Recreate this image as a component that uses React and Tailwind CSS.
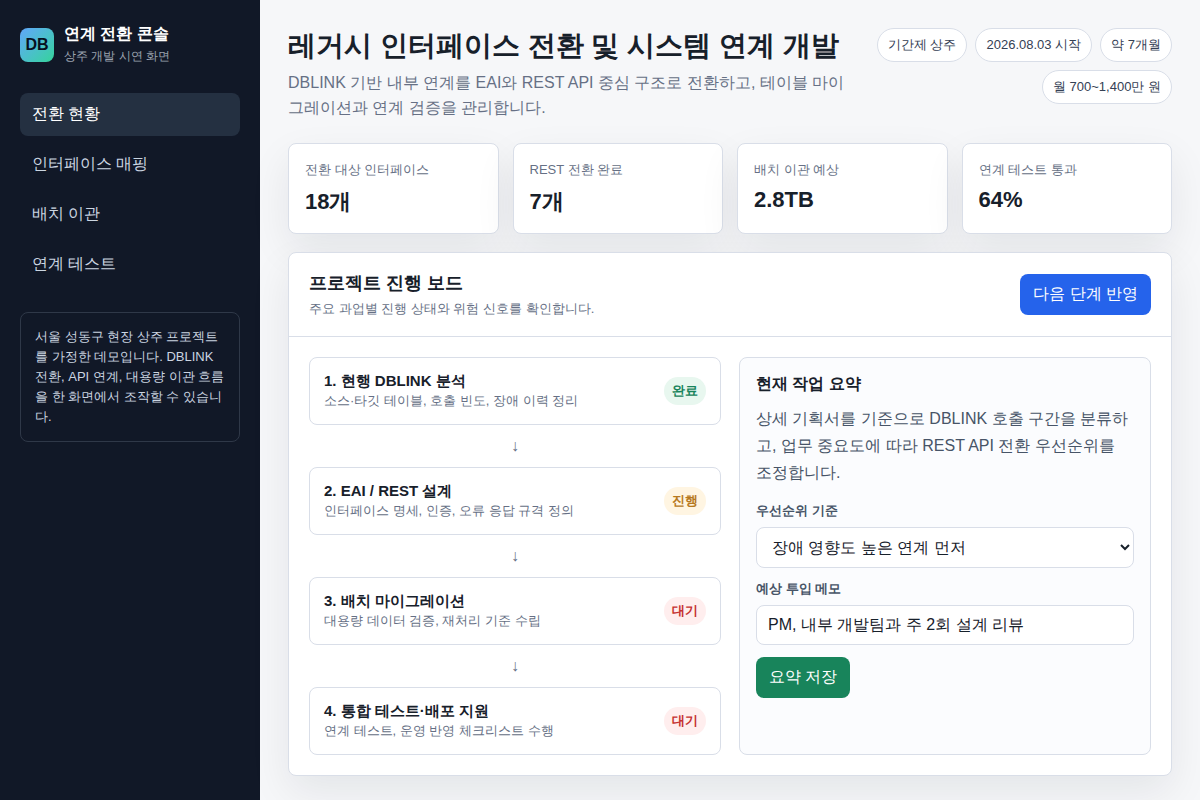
import { useState } from "react";
import clsx from "clsx";

const NAV_ITEMS = ["전환 현황", "인터페이스 매핑", "배치 이관", "연계 테스트"];

const TAGS = ["기간제 상주", "2026.08.03 시작", "약 7개월", "월 700~1,400만 원"];

const METRICS = [
  { label: "전환 대상 인터페이스", value: "18개" },
  { label: "REST 전환 완료", value: "7개" },
  { label: "배치 이관 예상", value: "2.8TB" },
  { label: "연계 테스트 통과", value: "64%" },
];

const STEPS = [
  { title: "1. 현행 DBLINK 분석", desc: "소스·타깃 테이블, 호출 빈도, 장애 이력 정리", status: "완료" },
  { title: "2. EAI / REST 설계", desc: "인터페이스 명세, 인증, 오류 응답 규격 정의", status: "진행" },
  { title: "3. 배치 마이그레이션", desc: "대용량 데이터 검증, 재처리 기준 수립", status: "대기" },
  { title: "4. 통합 테스트·배포 지원", desc: "연계 테스트, 운영 반영 체크리스트 수행", status: "대기" },
];

const STATUS_STYLES = {
  완료: "bg-[#e8f7ef] text-[#18845b]",
  진행: "bg-[#fff5e2] text-[#b7791f]",
  대기: "bg-[#ffeeee] text-[#c53030]",
};

function Sidebar({ active, onSelect }) {
  return (
    <aside className="w-[260px] shrink-0 bg-[#111827] px-5 py-6 text-white">
      <div className="mb-7 flex items-center gap-2.5">
        <div className="grid size-[34px] place-items-center rounded-lg bg-linear-135 from-[#60a5fa] to-[#34d399] font-bold text-[#07111f]">
          DB
        </div>
        <div>
          <strong className="block text-base leading-5">연계 전환 콘솔</strong>
          <span className="block pt-1 text-xs leading-[17px] text-[#9ca3af]">상주 개발 시연 화면</span>
        </div>
      </div>

      <nav className="flex flex-col gap-[7px]">
        {NAV_ITEMS.map((item) => (
          <button
            key={item}
            type="button"
            onClick={() => onSelect(item)}
            className={clsx(
              "h-[43px] rounded-lg px-3 text-left leading-[normal]",
              item === active ? "bg-[#243041] text-white" : "text-[#cbd5e1]"
            )}
          >
            {item}
          </button>
        ))}
      </nav>

      <p className="mt-[26px] rounded-lg border border-[#2f3848] p-3.5 text-[13px] leading-5 text-[#cbd5e1]">
        서울 성동구 현장 상주 프로젝트를 가정한 데모입니다. DBLINK 전환, API 연계, 대용량 이관 흐름을 한 화면에서 조작할 수 있습니다.
      </p>
    </aside>
  );
}

function Step({ title, desc, status }) {
  return (
    <div className="flex h-[68px] items-center justify-between rounded-lg border border-[#d9dee8] bg-white px-3.5">
      <div>
        <strong className="block text-[15px] leading-5">{title}</strong>
        <span className="block text-[13px] leading-5 text-[#667085]">{desc}</span>
      </div>
      <span className={clsx("rounded-full px-2 py-1 text-[13px] leading-5 font-bold", STATUS_STYLES[status])}>
        {status}
      </span>
    </div>
  );
}

function SummaryPanel() {
  const [memo, setMemo] = useState("PM, 내부 개발팀과 주 2회 설계 리뷰");

  return (
    <section className="rounded-lg border border-[#d9dee8] bg-[#fbfcfe] p-4">
      <h3 className="mb-[11px] text-base leading-5 font-bold">현재 작업 요약</h3>
      <p className="mb-[15px] leading-[27px] text-[#475467]">
        상세 기획서를 기준으로 DBLINK 호출 구간을 분류하고, 업무 중요도에 따라 REST API 전환 우선순위를 조정합니다.
      </p>
      <label htmlFor="priority" className="mt-[11px] mb-1.5 block text-[13px] leading-5 font-bold text-[#475467]">
        우선순위 기준
      </label>
      <select id="priority" className="block h-[41px] w-full rounded-lg border border-[#d9dee8] bg-white px-[11px]">
        <option>장애 영향도 높은 연계 먼저</option>
        <option>호출량이 많은 연계 먼저</option>
      </select>
      <label htmlFor="memo" className="mt-[11px] mb-1.5 block text-[13px] leading-5 font-bold text-[#475467]">
        예상 투입 메모
      </label>
      <input
        id="memo"
        value={memo}
        onChange={(e) => setMemo(e.target.value)}
        className="block h-10 w-full rounded-lg border border-[#d9dee8] bg-white px-[11px]"
      />
      <button type="button" className="mt-3 h-[41px] rounded-lg bg-[#18845b] px-[13px] leading-[normal] text-white">
        요약 저장
      </button>
    </section>
  );
}

export default function App() {
  const [active, setActive] = useState(NAV_ITEMS[0]);

  return (
    <div className="flex min-h-screen bg-[#f6f7f9] font-['Liberation_Sans',sans-serif] text-[#17202a]">
      <Sidebar active={active} onSelect={setActive} />

      <main className="min-w-0 flex-1 p-7 pb-6">
        <header className="mb-[23px] flex items-start justify-between gap-5">
          <div className="min-w-0 flex-1">
            <h1 className="mb-1.5 text-[28px] leading-9 font-bold">레거시 인터페이스 전환 및 시스템 연계 개발</h1>
            <p className="leading-[25px] text-[#667085]">
              DBLINK 기반 내부 연계를 EAI와 REST API 중심 구조로 전환하고, 테이블 마이그레이션과 연계 검증을 관리합니다.
            </p>
          </div>
          <ul className="flex w-[300px] shrink-0 flex-wrap justify-end gap-2">
            {TAGS.map((tag) => (
              <li
                key={tag}
                className="rounded-full border border-[#d9dee8] bg-white px-2.5 py-1.5 text-[13px] leading-5 text-[#344054]"
              >
                {tag}
              </li>
            ))}
          </ul>
        </header>

        <div className="mb-[18px] grid grid-cols-4 gap-3.5">
          {METRICS.map(({ label, value }) => (
            <div
              key={label}
              className="h-[91px] rounded-lg border border-[#d9dee8] bg-white p-4 shadow-[0_16px_40px_rgba(17,24,39,0.08)]"
            >
              <span className="block text-[13px] leading-5 text-[#667085]">{label}</span>
              <strong className="mt-[7px] block text-[22px] leading-[normal]">{value}</strong>
            </div>
          ))}
        </div>

        {/* relative keeps the metric shadows underneath the board */}
        <section className="relative rounded-lg border border-[#d9dee8] bg-white shadow-[0_16px_40px_rgba(17,24,39,0.08)]">
          <div className="flex items-center justify-between border-b border-[#d9dee8] px-5 py-[17px]">
            <div>
              <h2 className="text-lg leading-[27px] font-bold">프로젝트 진행 보드</h2>
              <p className="mt-0.5 text-[13px] leading-5 text-[#667085]">주요 과업별 진행 상태와 위험 신호를 확인합니다.</p>
            </div>
            <button type="button" className="h-[41px] rounded-lg bg-[#2563eb] px-[13px] leading-[normal] text-white">
              다음 단계 반영
            </button>
          </div>

          <div className="grid grid-cols-2 gap-[18px] p-5">
            <div>
              {STEPS.map((step, i) => (
                <div key={step.title}>
                  {i > 0 && <div className="py-[9px] text-center leading-6 text-[#667085]">↓</div>}
                  <Step {...step} />
                </div>
              ))}
            </div>
            <SummaryPanel />
          </div>
        </section>
      </main>
    </div>
  );
}
